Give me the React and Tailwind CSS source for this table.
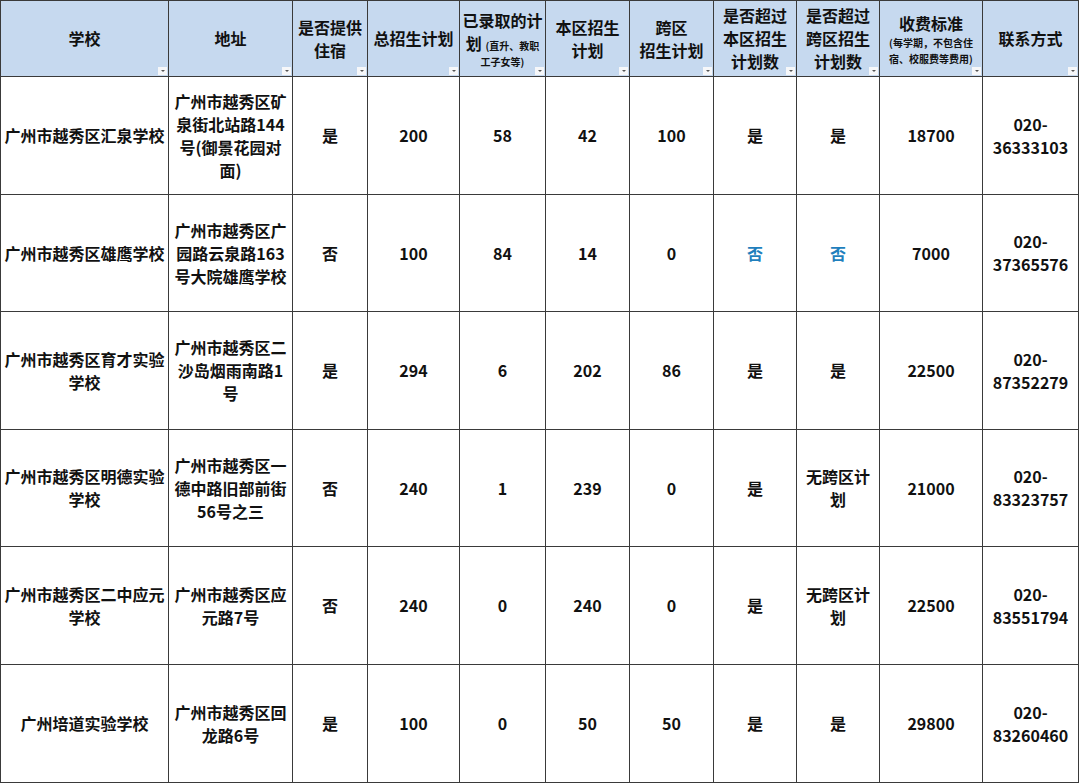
import React from "react";

const rows = [
  ["广州市越秀区汇泉学校", "广州市越秀区矿\n泉街北站路144\n号(御景花园对\n面)", "是", "200", "58", "42", "100", "是", "是", "18700", "020-\n36333103"],
  ["广州市越秀区雄鹰学校", "广州市越秀区广\n园路云泉路163\n号大院雄鹰学校", "否", "100", "84", "14", "0", "否*", "否*", "7000", "020-\n37365576"],
  ["广州市越秀区育才实验\n学校", "广州市越秀区二\n沙岛烟雨南路1\n号", "是", "294", "6", "202", "86", "是", "是", "22500", "020-\n87352279"],
  ["广州市越秀区明德实验\n学校", "广州市越秀区一\n德中路旧部前街\n56号之三", "否", "240", "1", "239", "0", "是", "无跨区计\n划", "21000", "020-\n83323757"],
  ["广州市越秀区二中应元\n学校", "广州市越秀区应\n元路7号", "否", "240", "0", "240", "0", "是", "无跨区计\n划", "22500", "020-\n83551794"],
  ["广州培道实验学校", "广州市越秀区回\n龙路6号", "是", "100", "0", "50", "50", "是", "是", "29800", "020-\n83260460"],
];

function Drop() {
  return (
    <span className="absolute right-[1px] bottom-[1px] w-[9px] h-[8px] bg-[#f6f7f9] flex items-center justify-center">
      <span className="block w-0 h-0 border-l-[2.5px] border-r-[2.5px] border-t-[2.5px] border-l-transparent border-r-transparent border-t-[#555]" />
    </span>
  );
}

function H({ children }) {
  return (
    <div className="relative bg-[#c6d9ef] border-r border-b border-[#3a3a3a] flex flex-col items-center justify-center text-center text-[16px] leading-[23px]">
      {children}
      <Drop />
    </div>
  );
}

const Small = ({ children, className = "" }) => (
  <span className={"text-[10px] leading-[16px] " + className}>{children}</span>
);

export default function App() {
  return (
    <div
      className="w-[1080px] h-[783px] bg-white overflow-hidden text-[#111] font-bold"
      style={{ fontFamily: '"Noto Sans CJK SC", "Noto Sans", sans-serif' }}
    >
      <div className="grid grid-cols-[168px_124px_75px_92px_86px_84px_84px_83px_83px_103px_96px] grid-rows-[76px_118px_117px_118px_117px_118px_118px] border-l border-t border-[#3a3a3a] w-[1079px]">
        <H>学校</H>
        <H>地址</H>
        <H>
          <div>是否提供</div>
          <div>住宿</div>
        </H>
        <H>总招生计划</H>
        <H>
          <div className="leading-[24px]">已录取的计</div>
          <div className="leading-[22px] whitespace-nowrap">
            划 <Small>(直升、教职</Small>
          </div>
          <div className="text-[10px] leading-[15px]">工子女等)</div>
        </H>
        <H>
          <div>本区招生</div>
          <div>计划</div>
        </H>
        <H>
          <div>跨区</div>
          <div>招生计划</div>
        </H>
        <H>
          <div>是否超过</div>
          <div>本区招生</div>
          <div>计划数</div>
        </H>
        <H>
          <div>是否超过</div>
          <div>跨区招生</div>
          <div>计划数</div>
        </H>
        <H>
          <div className="leading-[24px]">收费标准</div>
          <div className="text-[10px] leading-[16px] whitespace-nowrap">(每学期，不包含住</div>
          <div className="text-[10px] leading-[16px] whitespace-nowrap">宿、校服费等费用)</div>
        </H>
        <H>联系方式</H>

        {rows.map((r, i) =>
          r.map((c, j) => {
            const blue = c.endsWith("*");
            const text = blue ? c.slice(0, -1) : c;
            return (
              <div
                key={i + "-" + j}
                className={
                  "border-r border-b border-[#3a3a3a] flex items-center justify-center text-center text-[16px] leading-[23px] whitespace-pre-line " +
                  (blue ? "text-[#1f7fbd]" : "")
                }
              >
                {text}
              </div>
            );
          })
        )}
      </div>
    </div>
  );
}
